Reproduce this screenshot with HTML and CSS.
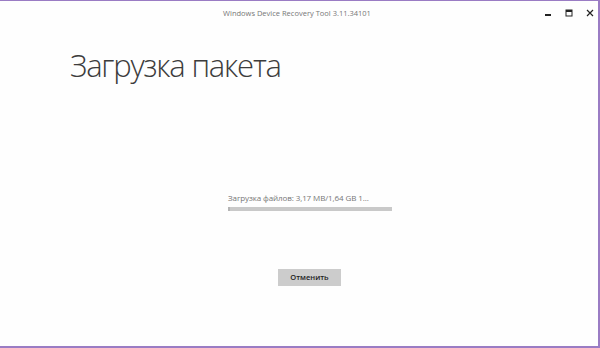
FILE: index.html
```html
<!DOCTYPE html>
<html lang="ru">
<head>
  <meta charset="UTF-8">
  <title>Windows Device Recovery Tool</title>
  <link rel="stylesheet" href="styles.css">
</head>
<body>
  <div class="window">
    <div class="titlebar">
      <div class="title">Windows Device Recovery Tool 3.11.34101</div>
      <div class="controls">
        <span class="ctl">
          <svg width="8" height="8" viewBox="0 0 8 8"><rect x="1" y="5" width="6" height="2" fill="#222"/></svg>
        </span>
        <span class="ctl">
          <svg width="8" height="8" viewBox="0 0 8 8"><rect x="1" y="1" width="6" height="6" fill="none" stroke="#222" stroke-width="1"/><rect x="1" y="1" width="6" height="2" fill="#222"/></svg>
        </span>
        <span class="ctl">
          <svg width="8" height="8" viewBox="0 0 8 8"><path d="M1 1 L7 7 M7 1 L1 7" stroke="#222" stroke-width="1.2"/></svg>
        </span>
      </div>
    </div>

    <h1 class="heading">Загрузка пакета</h1>

    <div class="progress-block">
      <div class="progress-label">Загрузка файлов: 3,17 MB/1,64 GB 1...</div>
      <div class="progress-bar"><div class="progress-fill" style="width: 1%"></div></div>
    </div>

    <div class="actions">
      <button class="cancel">Отменить</button>
    </div>
  </div>
</body>
</html>
```

FILE: styles.css
```css
* {
  margin: 0;
  padding: 0;
  box-sizing: border-box;
}

body {
  background: #fdfdfd;
  font-family: 'Open Sans', 'Noto Sans', sans-serif;
  width: 600px;
  height: 348px;
  overflow: hidden;
}

.window {
  width: 600px;
  height: 348px;
  border-top: 1px solid #9a7cc4;
  border-right: 2px solid #9a7cc4;
  border-bottom: 2px solid #9a7cc4;
  background: #fefefe;
  display: flex;
  flex-direction: column;
}

.titlebar {
  height: 24px;
  display: flex;
  align-items: center;
  justify-content: center;
  position: relative;
}

.title {
  font-size: 7.5px;
  color: #777;
  margin-right: 4px;
}

.controls {
  position: absolute;
  right: 4px;
  top: 8px;
  display: flex;
  gap: 13px;
}

.ctl {
  width: 8px;
  height: 8px;
  display: flex;
}

.heading {
  font-weight: 300;
  font-size: 31px;
  letter-spacing: -1.2px;
  color: #3c3c3c;
  margin: 20px 0 0 70px;
  line-height: 40px;
}

.progress-block {
  margin: 107px 0 0 228px;
  width: 164px;
}

.progress-label {
  font-size: 8px;
  color: #777;
  line-height: 12px;
  letter-spacing: -0.1px;
}

.progress-bar {
  margin-top: 3px;
  height: 4px;
  background: #c9c9c9;
}

.progress-fill {
  height: 100%;
  background: #b5b5b5;
}

.actions {
  margin: 52px 0 0 278px;
}

.cancel {
  width: 63px;
  height: 17px;
  background: #cccccc;
  border: none;
  font-family: 'Open Sans', 'Noto Sans', sans-serif;
  font-size: 7.5px;
  font-weight: 600;
  color: #222;
}
```
